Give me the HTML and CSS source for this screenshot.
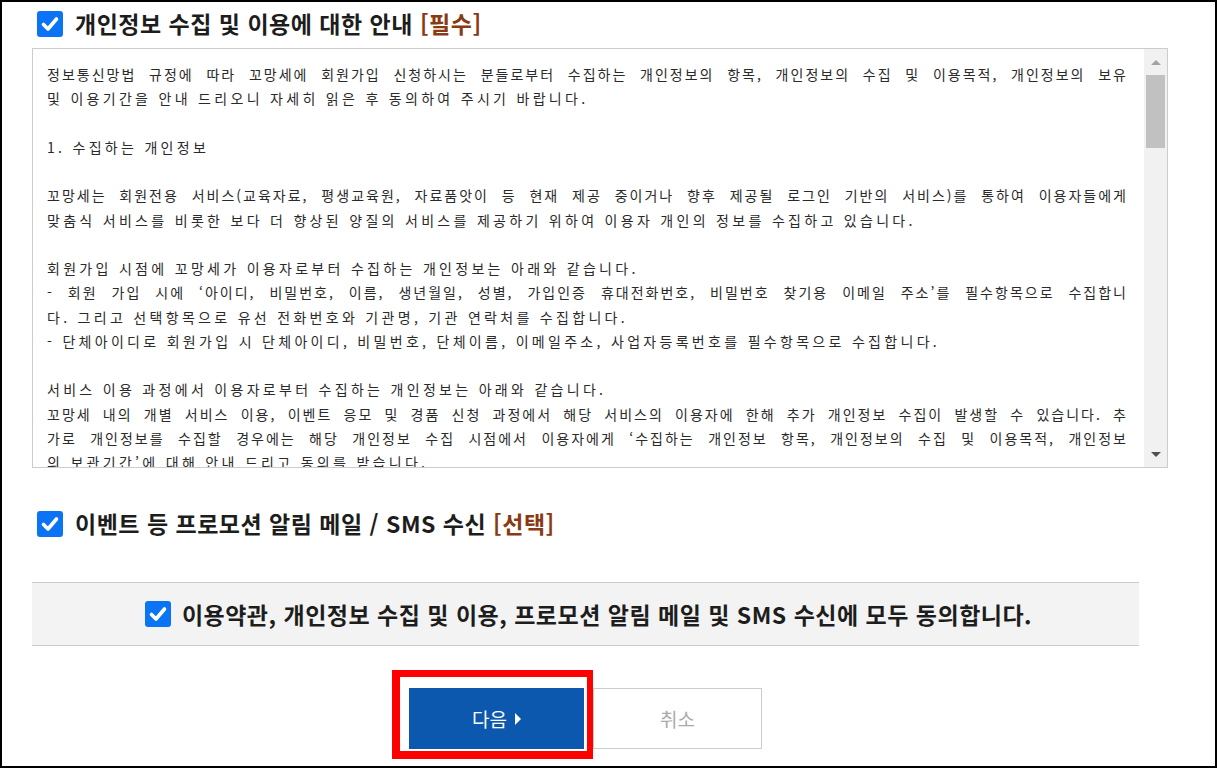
FILE: index.html
```html
<!DOCTYPE html>
<html lang="ko">
<head>
    <meta charset="UTF-8">
    <meta name="viewport" content="width=device-width, initial-scale=1.0">
    <title>회원가입 약관 동의</title>
    <link rel="stylesheet" href="styles.css">
</head>
<body>
    <div class="page">
        <div class="agree-head">
            <span class="check">
                <svg viewBox="0 0 26 26" width="26" height="26"><rect width="26" height="26" rx="3" fill="#0a74f4"/><path d="M6.5 13.5 L11 18 L19.5 8" fill="none" stroke="#fff" stroke-width="3.6" stroke-linecap="round" stroke-linejoin="round"/></svg>
            </span>
            <h2 class="agree-title">개인정보 수집 및 이용에 대한 안내 <em>[필수]</em></h2>
        </div>

        <div class="terms-box">
            <div class="terms-text">
                <span class="ln full">정보통신망법 규정에 따라 꼬망세에 회원가입 신청하시는 분들로부터 수집하는 개인정보의 항목, 개인정보의 수집 및 이용목적, 개인정보의 보유</span>
                <span class="ln">및 이용기간을 안내 드리오니 자세히 읽은 후 동의하여 주시기 바랍니다.</span>
                <span class="ln">&nbsp;</span>
                <span class="ln">1. 수집하는 개인정보</span>
                <span class="ln">&nbsp;</span>
                <span class="ln full">꼬망세는 회원전용 서비스(교육자료, 평생교육원, 자료품앗이 등 현재 제공 중이거나 향후 제공될 로그인 기반의 서비스)를 통하여 이용자들에게</span>
                <span class="ln">맞춤식 서비스를 비롯한 보다 더 향상된 양질의 서비스를 제공하기 위하여 이용자 개인의 정보를 수집하고 있습니다.</span>
                <span class="ln">&nbsp;</span>
                <span class="ln">회원가입 시점에 꼬망세가 이용자로부터 수집하는 개인정보는 아래와 같습니다.</span>
                <span class="ln full">- 회원 가입 시에 ‘아이디, 비밀번호, 이름, 생년월일, 성별, 가입인증 휴대전화번호, 비밀번호 찾기용 이메일 주소’를 필수항목으로 수집합니</span>
                <span class="ln">다. 그리고 선택항목으로 유선 전화번호와 기관명, 기관 연락처를 수집합니다.</span>
                <span class="ln">- 단체아이디로 회원가입 시 단체아이디, 비밀번호, 단체이름, 이메일주소, 사업자등록번호를 필수항목으로 수집합니다.</span>
                <span class="ln">&nbsp;</span>
                <span class="ln">서비스 이용 과정에서 이용자로부터 수집하는 개인정보는 아래와 같습니다.</span>
                <span class="ln full">꼬망세 내의 개별 서비스 이용, 이벤트 응모 및 경품 신청 과정에서 해당 서비스의 이용자에 한해 추가 개인정보 수집이 발생할 수 있습니다. 추</span>
                <span class="ln full">가로 개인정보를 수집할 경우에는 해당 개인정보 수집 시점에서 이용자에게 ‘수집하는 개인정보 항목, 개인정보의 수집 및 이용목적, 개인정보</span>
                <span class="ln">의 보관기간’에 대해 안내 드리고 동의를 받습니다.</span>
            </div>
            <div class="scrollbar">
                <span class="sb-btn"><i class="arrow-up"></i></span>
                <span class="sb-thumb"></span>
                <span class="sb-space"></span>
                <span class="sb-btn"><i class="arrow-down"></i></span>
            </div>
        </div>

        <div class="agree-head second">
            <span class="check">
                <svg viewBox="0 0 26 26" width="26" height="26"><rect width="26" height="26" rx="3" fill="#0a74f4"/><path d="M6.5 13.5 L11 18 L19.5 8" fill="none" stroke="#fff" stroke-width="3.6" stroke-linecap="round" stroke-linejoin="round"/></svg>
            </span>
            <h2 class="agree-title">이벤트 등 프로모션 알림 메일 / SMS 수신 <em>[선택]</em></h2>
        </div>

        <div class="agree-all">
            <span class="check">
                <svg viewBox="0 0 26 26" width="26" height="26"><rect width="26" height="26" rx="3" fill="#0a74f4"/><path d="M6.5 13.5 L11 18 L19.5 8" fill="none" stroke="#fff" stroke-width="3.6" stroke-linecap="round" stroke-linejoin="round"/></svg>
            </span>
            <span class="agree-all-text">이용약관, 개인정보 수집 및 이용, 프로모션 알림 메일 및 SMS 수신에 모두 동의합니다.</span>
        </div>

        <div class="btn-row">
            <span class="btn-mark">
                <a href="#" class="btn btn-next">다음 <i class="tri"></i></a>
            </span>
            <a href="#" class="btn btn-cancel">취소</a>
        </div>
    </div>
</body>
</html>
```

FILE: styles.css
```css
body {
    margin: 0;
    padding: 0;
    background: #fff;
    font-family: "Noto Sans CJK KR", "Noto Sans", sans-serif;
    color: #222;
}

.page {
    width: 1217px;
    height: 768px;
    box-sizing: border-box;
    border: 2px solid #000;
    padding-left: 30px;
    overflow: hidden;
}

.agree-head {
    display: flex;
    align-items: center;
    gap: 12px;
    padding: 8px 0 0 5px;
    height: 27px;
}

.agree-head.second {
    padding-top: 0;
    margin-top: 42px;
}

.check {
    display: block;
    width: 26px;
    height: 26px;
    flex: none;
}

.check svg {
    display: block;
}

.agree-title {
    margin: 0;
    font-size: 23px;
    font-weight: 700;
    line-height: 27px;
    color: #1d1d1d;
    letter-spacing: 0.5px;
}

.agree-title em {
    font-style: normal;
    color: #8a3a12;
}

/* 약관 박스 */
.terms-box {
    margin-top: 11px;
    width: 1136px;
    height: 420px;
    box-sizing: border-box;
    border: 1px solid #ccc;
    display: flex;
}

.terms-text {
    flex: 1;
    padding: 13px 16px 0 14px;
    overflow: hidden;
    font-size: 14px;
    line-height: 24.25px;
    color: #2a2a2a;
    letter-spacing: 3.3px;
    text-align: justify;
}

.terms-text .ln {
    display: block;
    white-space: nowrap;
}

.terms-text .ln.full {
    letter-spacing: 2px;
    text-align-last: justify;
    white-space: normal;
}

.scrollbar {
    width: 23px;
    background: #f1f1f1;
    display: flex;
    flex-direction: column;
}

.sb-btn {
    height: 26px;
    display: flex;
    align-items: center;
    justify-content: center;
}

.arrow-up {
    width: 0;
    height: 0;
    border-left: 5px solid transparent;
    border-right: 5px solid transparent;
    border-bottom: 5px solid #a3a3a3;
}

.arrow-down {
    width: 0;
    height: 0;
    border-left: 5px solid transparent;
    border-right: 5px solid transparent;
    border-top: 5px solid #505050;
}

.sb-thumb {
    height: 73px;
    margin: 0 2px;
    background: #c1c1c1;
}

.sb-space {
    flex: 1;
}

/* 전체 동의 */
.agree-all {
    margin-top: 45px;
    width: 1107px;
    height: 64px;
    box-sizing: border-box;
    border-top: 1px solid #ccc;
    border-bottom: 1px solid #ccc;
    background: #f3f3f3;
    display: flex;
    align-items: center;
    justify-content: center;
    gap: 11px;
    padding-left: 6px;
}

.agree-all-text {
    font-size: 23px;
    font-weight: 700;
    color: #1d1d1d;
    letter-spacing: 0.5px;
}

/* 버튼 */
.btn-row {
    margin-top: 42px;
    width: 1107px;
    display: flex;
    justify-content: center;
    gap: 9px;
}

.btn-mark {
    position: relative;
    display: block;
}

.btn-mark::after {
    content: "";
    position: absolute;
    top: -18px;
    left: -17px;
    width: 201px;
    height: 89px;
    box-sizing: border-box;
    border: 7px solid #f00;
    border-left-width: 8px;
    border-bottom-width: 8px;
    border-right-width: 6px;
}

.btn {
    display: flex;
    align-items: center;
    justify-content: center;
    height: 61px;
    box-sizing: border-box;
    font-size: 19px;
    text-decoration: none;
}

.btn-next {
    width: 175px;
    background: #0c58ae;
    color: #fff;
    gap: 8px;
}

.tri {
    width: 0;
    height: 0;
    border-top: 6px solid transparent;
    border-bottom: 6px solid transparent;
    border-left: 6px solid #fff;
}

.btn-cancel {
    width: 169px;
    border: 1px solid #ccc;
    color: #aaa;
}
```
